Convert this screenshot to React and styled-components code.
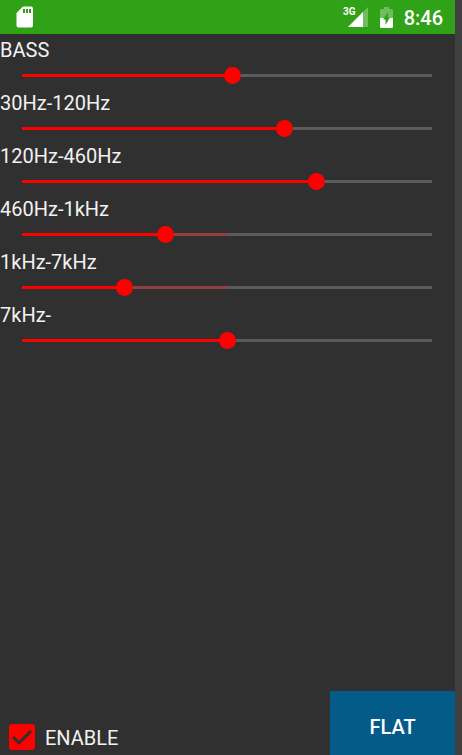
import React, { useState } from "react";
import styled, { createGlobalStyle } from "styled-components";

const GlobalStyle = createGlobalStyle`
  *, *::before, *::after { box-sizing: border-box; }
  body {
    margin: 0;
    background: #404040;
    color: #f2f2f2;
    font-family: Roboto, "Liberation Sans", sans-serif;
    font-size: 20px;
    line-height: 24px;
  }
`;

const Screen = styled.div`
  display: flex;
  flex-direction: column;
  min-height: 100vh;
  margin-right: 7px;
  background: #303030;
`;

const StatusBar = styled.header`
  display: flex;
  align-items: center;
  height: 34px;
  padding: 0 12px 0 16px;
  background: #30a217;
  color: #ffffff;
`;

const StatusIcons = styled.div`
  display: flex;
  align-items: center;
  gap: 12px;
  margin-left: auto;
`;

const Signal = styled.div`
  display: flex;
  align-items: flex-start;
`;

const NetworkType = styled.span`
  font-size: 10px;
  line-height: 10px;
  font-weight: 700;
  margin-right: -8px;
`;

const Clock = styled.time`
  margin-left: 11px;
  padding-top: 2px;
  font-weight: 500;
`;

const Bands = styled.main`
  flex: 1;
  padding-top: 4px;
`;

const Band = styled.div`
  display: flex;
  flex-direction: column;
  height: 53px;
`;

const BandLabel = styled.label`
  height: 24px;
`;

const BandSlider = styled.input`
  appearance: none;
  height: 27px;
  margin: 0 14px;
  background: transparent;
  cursor: pointer;

  &::-webkit-slider-runnable-track {
    height: 3px;
    background: linear-gradient(
      to right,
      transparent 8px,
      #ff0000 8px,
      #ff0000 calc(8px + (100% - 16px) * var(--level)),
      #8f4040 calc(8px + (100% - 16px) * var(--level)),
      #8f4040 50%,
      #5b5b5b 50%,
      #5b5b5b calc(100% - 9px),
      transparent calc(100% - 9px)
    );
  }

  &::-webkit-slider-thumb {
    appearance: none;
    width: 17px;
    height: 17px;
    margin-top: -7px;
    border-radius: 50%;
    background: #ff0000;
  }
`;

const Footer = styled.footer`
  display: flex;
  align-items: flex-end;
  justify-content: space-between;
`;

const EnableLabel = styled.label`
  display: flex;
  align-items: center;
  gap: 10px;
  padding: 0 0 5px 9px;
  cursor: pointer;
`;

const CheckControl = styled.span`
  display: grid;
  width: 26px;
  height: 26px;

  & > * {
    grid-area: 1 / 1;
  }
`;

const CheckInput = styled.input`
  appearance: none;
  width: 26px;
  height: 26px;
  margin: 0;
  border: 3px solid #ff0000;
  border-radius: 3px;

  &:checked {
    background: #ff0000;
  }

  &:not(:checked) + svg {
    visibility: hidden;
  }
`;

const CheckMark = styled.svg`
  width: 26px;
  height: 26px;
  pointer-events: none;
`;

const EnableText = styled.span`
  padding-top: 2px;
`;

const FlatButton = styled.button`
  min-width: 125px;
  height: 64px;
  padding: 8px 16px 0;
  border: 0;
  background: #045a88;
  color: #ffffff;
  font: inherit;
  font-weight: 500;
  cursor: pointer;
`;

const initialBands = [
  { id: "bass", label: "BASS", value: 513 },
  { id: "band1", label: "30Hz-120Hz", value: 639 },
  { id: "band2", label: "120Hz-460Hz", value: 718 },
  { id: "band3", label: "460Hz-1kHz", value: 349 },
  { id: "band4", label: "1kHz-7kHz", value: 249 },
  { id: "band5", label: "7kHz-", value: 500 },
];

function SdCardIcon() {
  return (
    <svg width="18" height="22" viewBox="0 0 18 22" aria-hidden="true">
      <path
        fill="#fff"
        fillRule="evenodd"
        d="M7 .5h8a2 2 0 0 1 2 2V19.500a2 2 0 0 1-2 2h-12.500a2 2 0 0 1-2-2V7zM7 3v4h2V3zM10 3v4h2V3zM13 3v4h2V3z"
      />
    </svg>
  );
}

function SignalIcon() {
  return (
    <svg width="20" height="20" viewBox="0 0 20 20" aria-hidden="true">
      <path fill="#fff" fillOpacity=".3" d="M20 0v20H0z" />
      <path fill="#fff" d="M15 5v15H0z" />
    </svg>
  );
}

function BatteryIcon() {
  return (
    <svg width="13" height="21" viewBox="0 0 13 21" aria-hidden="true">
      <path
        fill="#fff"
        fillOpacity=".3"
        d="M4 0h5v2h2.500Q13 2 13 3.500V11H9.700L10 10.500H8V5L4 11H0V3.500Q0 2 1.500 2H4z"
      />
      <path
        fill="#fff"
        d="M0 11h4L3 12.500h2.500V18L9.700 11H13v8.500q0 1.500-1.500 1.500h-10Q0 21 0 19.500z"
      />
    </svg>
  );
}

export default function App() {
  const [bands, setBands] = useState(initialBands);
  const [enabled, setEnabled] = useState(true);

  const setBand = (id, value) =>
    setBands((all) => all.map((b) => (b.id === id ? { ...b, value } : b)));

  const flatten = () =>
    setBands((all) => all.map((b) => ({ ...b, value: 500 })));

  return (
    <>
      <GlobalStyle />
      <Screen>
        <StatusBar>
          <SdCardIcon />
          <StatusIcons>
            <Signal>
              <NetworkType>3G</NetworkType>
              <SignalIcon />
            </Signal>
            <BatteryIcon />
          </StatusIcons>
          <Clock>8:46</Clock>
        </StatusBar>
        <Bands>
          {bands.map((band) => (
            <Band key={band.id}>
              <BandLabel htmlFor={band.id}>{band.label}</BandLabel>
              <BandSlider
                id={band.id}
                type="range"
                min="0"
                max="1000"
                value={band.value}
                onChange={(e) => setBand(band.id, Number(e.target.value))}
                style={{ "--level": band.value / 1000 }}
              />
            </Band>
          ))}
        </Bands>
        <Footer>
          <EnableLabel>
            <CheckControl>
              <CheckInput
                type="checkbox"
                checked={enabled}
                onChange={(e) => setEnabled(e.target.checked)}
              />
              <CheckMark viewBox="0 0 26 26" aria-hidden="true">
                <path d="M4 13l6 6L22 7" fill="none" stroke="#303030" strokeWidth="3" />
              </CheckMark>
            </CheckControl>
            <EnableText>ENABLE</EnableText>
          </EnableLabel>
          <FlatButton type="button" onClick={flatten}>
            FLAT
          </FlatButton>
        </Footer>
      </Screen>
    </>
  );
}
